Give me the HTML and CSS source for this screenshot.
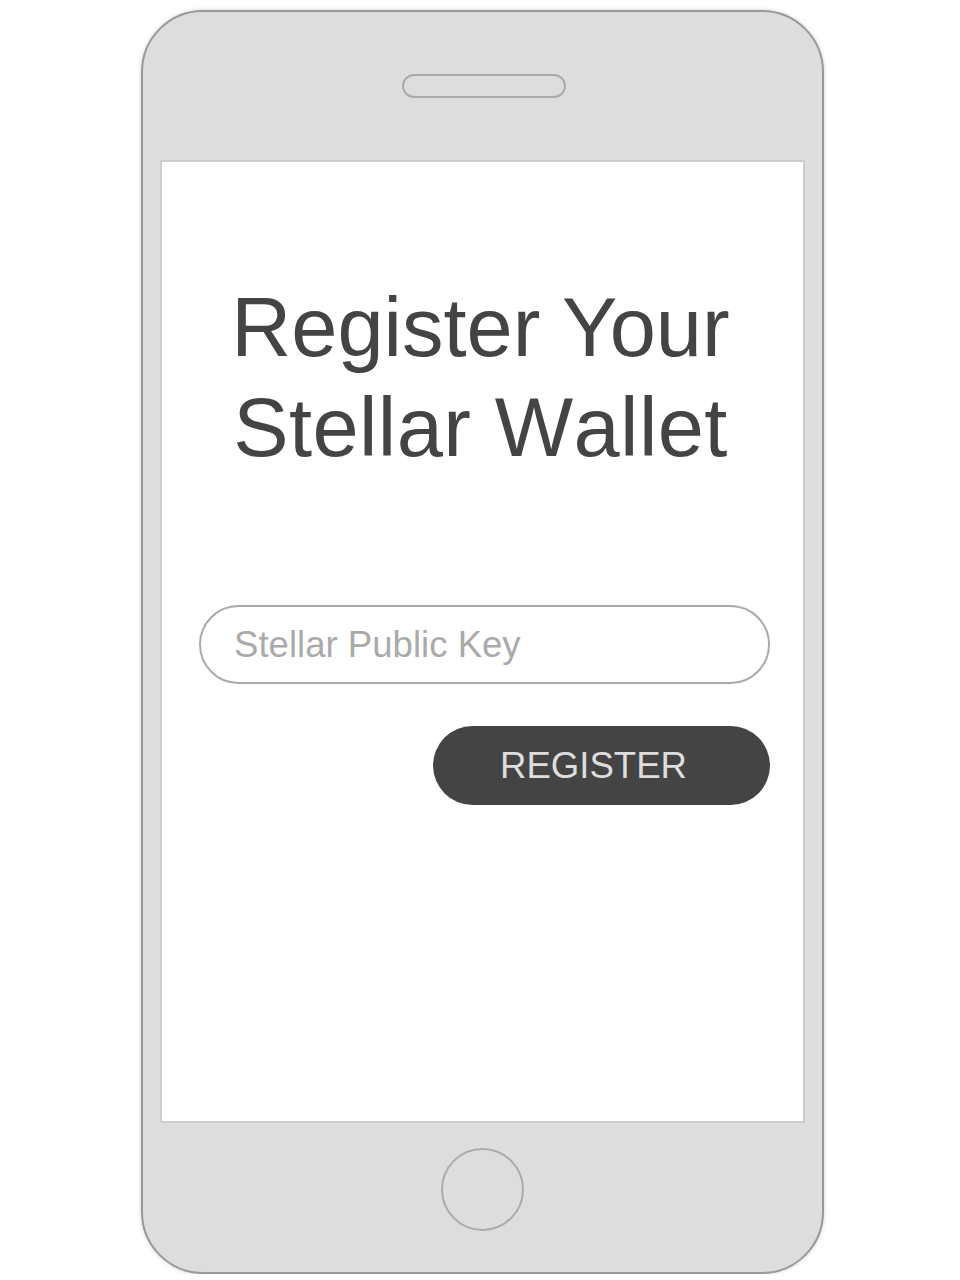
FILE: index.html
```html
<!DOCTYPE html>
<html lang="en">
<head>
<meta charset="utf-8">
<title>Register Your Stellar Wallet</title>
<link rel="stylesheet" href="styles.css">
</head>
<body>
<div class="phone">
  <div class="bezel-top">
    <div class="speaker"></div>
  </div>
  <main class="screen">
    <h1 class="title"><span class="title-line">Register Your</span><span class="title-line title-line-2">Stellar Wallet</span></h1>
    <form class="form">
      <input class="key-input" type="text" placeholder="Stellar Public Key">
      <button class="register-btn" type="button">REGISTER</button>
    </form>
  </main>
  <div class="bezel-bottom">
    <div class="home-btn"></div>
  </div>
</div>
</body>
</html>
```
FILE: styles.css
```css
* { box-sizing: border-box; }
html, body {
  margin: 0;
  padding: 0;
  background: #ffffff;
  font-family: "Liberation Sans", Arial, sans-serif;
}
body {
  padding: 10px 0 0 141px;
}
.phone {
  width: 683px;
  height: 1264px;
  border: 2px solid #999999;
  border-radius: 62px;
  background: #dddddd;
  box-shadow: 0 0 4px rgba(0,0,0,0.18);
  padding: 0 17px;
  display: flex;
  flex-direction: column;
}
.bezel-top {
  height: 148px;
  display: flex;
  justify-content: center;
  padding-top: 62px;
}
.speaker {
  width: 164px;
  height: 24px;
  border: 2px solid #aaaaaa;
  border-radius: 12px;
  margin-left: 2px;
}
.screen {
  height: 963px;
  background: #ffffff;
  border: 2px solid #cccccc;
  padding: 116px 33px 0 37px;
  display: flex;
  flex-direction: column;
}
.title {
  margin: 0;
  font-size: 83px;
  line-height: 100px;
  font-weight: normal;
  color: #444444;
  text-align: center;
  padding-right: 8px;
}
.title-line {
  display: block;
}
.title-line-2 {
  font-kerning: none;
  letter-spacing: 0.4px;
}
.form {
  margin-top: 127px;
  display: flex;
  flex-direction: column;
  align-items: flex-end;
}
.key-input {
  width: 100%;
  height: 79px;
  border: 2px solid #aaaaaa;
  border-radius: 40px;
  padding: 0 20px 0 33px;
  font-family: "Liberation Sans", Arial, sans-serif;
  font-size: 36.6px;
  font-kerning: none;
  color: #444444;
  background: #ffffff;
  outline: none;
}
.key-input::placeholder {
  color: #aaaaaa;
  opacity: 1;
}
.register-btn {
  margin-top: 42px;
  width: 337px;
  height: 79px;
  border: none;
  border-radius: 40px;
  background: #444444;
  color: #dddddd;
  font-family: "Liberation Sans", Arial, sans-serif;
  font-size: 36.6px;
  font-kerning: none;
  padding: 0 16px 0 0;
  cursor: pointer;
}
.bezel-bottom {
  flex: 1;
  display: flex;
  justify-content: center;
  padding-top: 25px;
}
.home-btn {
  width: 83px;
  height: 83px;
  border: 2px solid #aaaaaa;
  border-radius: 50%;
}
```
